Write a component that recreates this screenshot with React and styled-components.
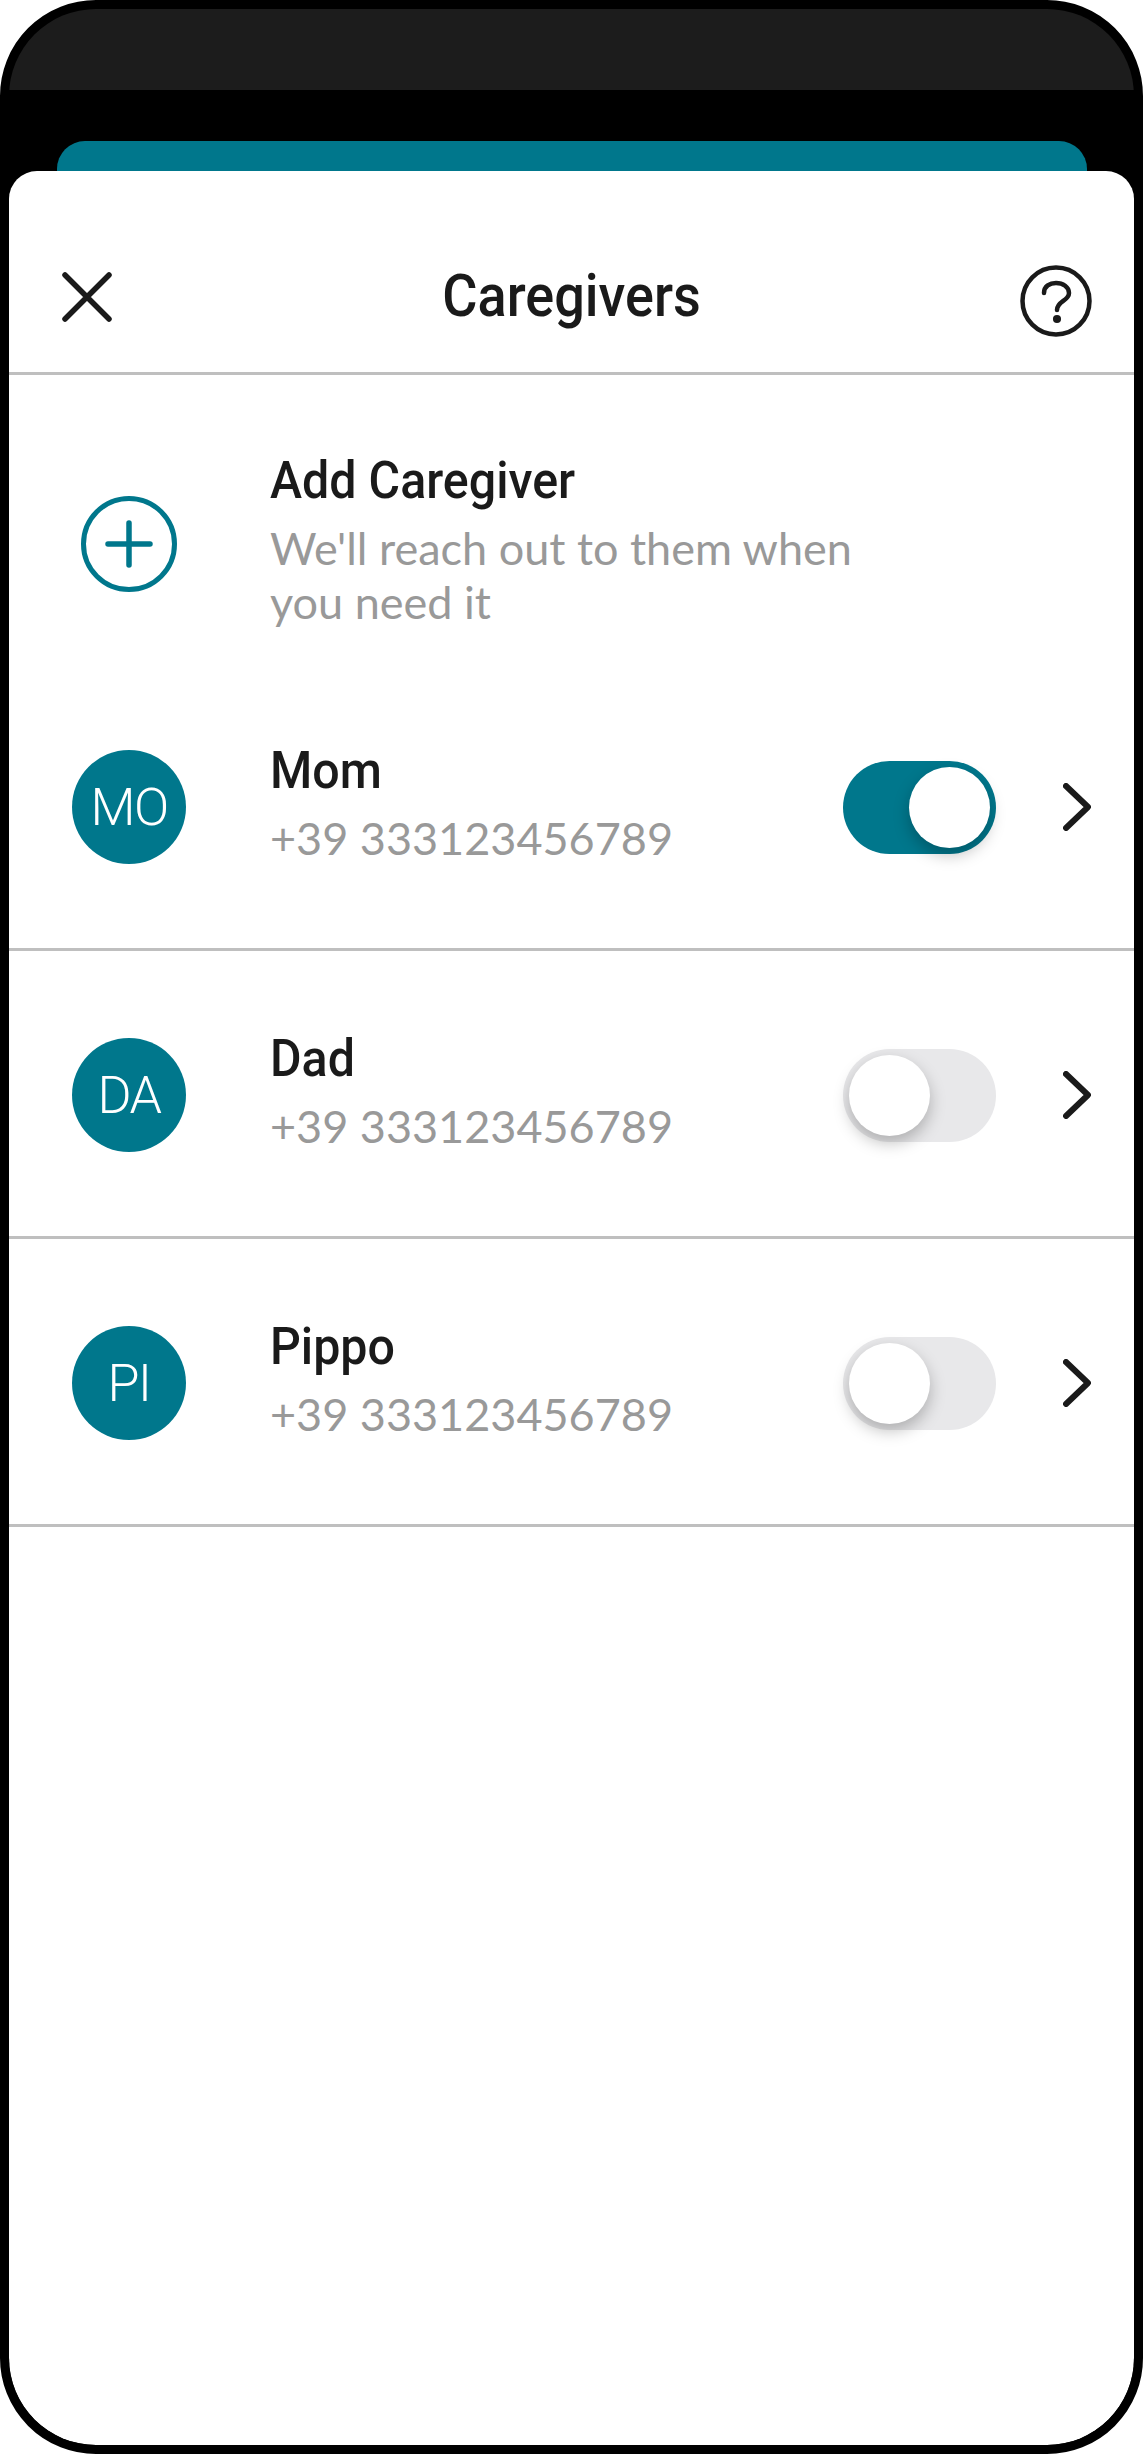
import React from "react";
import styled, { createGlobalStyle } from "styled-components";

const teal = "#00778c";
const ink = "#1a1a1a";

const GlobalStyle = createGlobalStyle`
  html, body {
    margin: 0;
    padding: 0;
    background: #fff;
  }
  * {
    box-sizing: border-box;
  }
`;

const Phone = styled.div`
  width: 1143px;
  height: 2454px;
  display: flex;
  flex-direction: column;
  background: #000;
  border: 9px solid #000;
  border-radius: 96px;
  overflow: hidden;
`;

const StatusBar = styled.div`
  height: 81px;
  flex: none;
  background: #1c1c1c;
  border-radius: 87px 87px 0 0;
`;

const BackCard = styled.div`
  height: 30px;
  flex: none;
  margin: 51px 47px 0 48px;
  background: ${teal};
  border-radius: 28px 28px 0 0;
`;

const Sheet = styled.div`
  flex: 1;
  background: #fff;
  border-radius: 28px 28px 87px 87px;
`;

const Header = styled.header`
  height: 204px;
  padding-top: 49px;
  display: grid;
  grid-template-columns: 1fr auto 1fr;
  align-items: center;
  border-bottom: 3px solid #bfbfbf;
`;

const CloseButton = styled.div`
  display: flex;
  margin: 2px 0 0 53px;
`;

const HelpButton = styled.div`
  display: flex;
  justify-content: flex-end;
  margin: 9px 42px 0 0;
`;

// no condensed DIN here, so Roboto gets narrowed
const Title = styled.h1`
  margin: 0;
  font-family: Roboto, sans-serif;
  font-size: 60px;
  font-weight: 500;
  line-height: 66px;
  color: ${ink};
  transform: scaleX(0.9);
`;

const Row = styled.div`
  height: 288px;
  padding: ${(props) => (props.$add ? "49px 43px 0 63px" : "3px 43px 0 63px")};
  display: flex;
  align-items: center;
  border-bottom: ${(props) => (props.$add ? "none" : "3px solid #bfbfbf")};
`;

const Leading = styled.div`
  width: 114px;
  flex: none;
  display: flex;
  justify-content: center;
`;

const Avatar = styled.div`
  width: 114px;
  height: 114px;
  border-radius: 50%;
  background: ${teal};
  color: #fff;
  display: flex;
  align-items: center;
  justify-content: center;
  font-family: Roboto, sans-serif;
  font-size: 52px;
  font-weight: 300;
  letter-spacing: -1.5px;
`;

const Info = styled.div`
  flex: 1;
  margin-left: 84px;
  padding-bottom: 8px;
  min-width: 0;
`;

const Name = styled.div`
  margin-bottom: 10px;
  font-family: Roboto, sans-serif;
  font-size: 52px;
  font-weight: 500;
  line-height: 60px;
  color: ${ink};
  transform: scaleX(0.93);
  transform-origin: left center;
`;

const Detail = styled.div`
  max-width: 620px;
  font-family: Lato, sans-serif;
  font-size: 45px;
  line-height: 54px;
  color: #999;
`;

const Toggle = styled.div`
  width: 153px;
  height: 93px;
  flex: none;
  padding: 6px;
  display: flex;
  justify-content: ${(props) => (props.$on ? "flex-end" : "flex-start")};
  align-items: center;
  border-radius: 47px;
  background: ${(props) => (props.$on ? teal : "#e8e8ea")};
`;

const Knob = styled.div`
  width: 81px;
  height: 81px;
  border-radius: 50%;
  background: #fff;
  box-shadow: 0 7px 16px rgba(0, 0, 0, 0.25);
`;

const Chevron = styled.div`
  display: flex;
  margin-left: 67px;
`;

function CloseIcon() {
  return (
    <svg width="50" height="50" viewBox="0 0 50 50" fill="none" stroke={ink} strokeWidth="5.5" strokeLinecap="round">
      <path d="M3 3 L47 47 M47 3 L3 47" />
    </svg>
  );
}

function HelpIcon() {
  return (
    <svg width="72" height="72" viewBox="0 0 72 72" fill="none" stroke={ink} strokeWidth="4.5" strokeLinecap="round">
      <circle cx="36" cy="36" r="33.5" />
      <path d="M24 28 C24 21 30 18 36 18 C43 18 49 22 49 28 C49 36 37 36 37 45" />
      <circle cx="37" cy="54" r="1.8" fill={ink} />
    </svg>
  );
}

function AddIcon() {
  return (
    <svg width="96" height="96" viewBox="0 0 96 96" fill="none" stroke={teal} strokeLinecap="round">
      <circle cx="48" cy="48" r="45.5" strokeWidth="5" />
      <path d="M27 48 H69 M48 27 V69" strokeWidth="5.5" />
    </svg>
  );
}

function ChevronIcon() {
  return (
    <svg width="28" height="48" viewBox="0 0 28 48" fill="none" stroke={ink} strokeWidth="6" strokeLinecap="round" strokeLinejoin="round">
      <path d="M3 3 L25 24 L3 45" />
    </svg>
  );
}

const caregivers = [
  { initials: "MO", name: "Mom", phone: "+39 333123456789", on: true },
  { initials: "DA", name: "Dad", phone: "+39 333123456789", on: false },
  { initials: "PI", name: "Pippo", phone: "+39 333123456789", on: false },
];

export default function App() {
  return (
    <>
      <GlobalStyle />
      <Phone>
        <StatusBar />
        <BackCard />
        <Sheet>
          <Header>
            <CloseButton>
              <CloseIcon />
            </CloseButton>
            <Title>Caregivers</Title>
            <HelpButton>
              <HelpIcon />
            </HelpButton>
          </Header>
          <Row $add>
            <Leading>
              <AddIcon />
            </Leading>
            <Info>
              <Name>Add Caregiver</Name>
              <Detail>We'll reach out to them when you need it</Detail>
            </Info>
          </Row>
          {caregivers.map((item) => (
            <Row key={item.initials}>
              <Leading>
                <Avatar>{item.initials}</Avatar>
              </Leading>
              <Info>
                <Name>{item.name}</Name>
                <Detail>{item.phone}</Detail>
              </Info>
              <Toggle $on={item.on}>
                <Knob />
              </Toggle>
              <Chevron>
                <ChevronIcon />
              </Chevron>
            </Row>
          ))}
        </Sheet>
      </Phone>
    </>
  );
}
